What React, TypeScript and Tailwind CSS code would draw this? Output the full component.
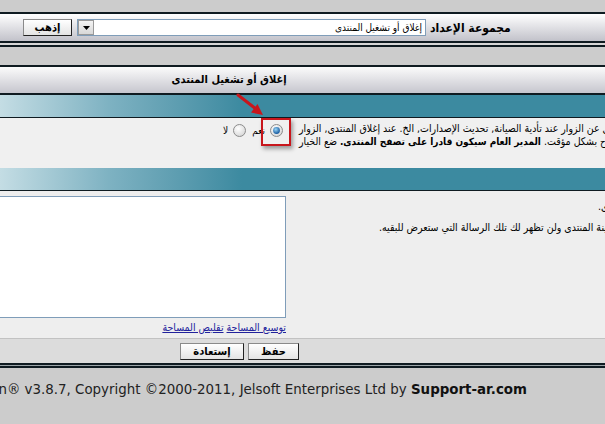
import React from "react";

// XP-style radio button
const Radio: React.FC<{ checked?: boolean }> = ({ checked }) => (
  <svg width="13" height="13" viewBox="0 0 13 13" className="shrink-0">
    <defs>
      <radialGradient id="radioFace" cx="40%" cy="35%" r="70%">
        <stop offset="0%" stopColor="#ffffff" />
        <stop offset="100%" stopColor="#d6d6d6" />
      </radialGradient>
      <radialGradient id="radioDot" cx="40%" cy="35%" r="65%">
        <stop offset="0%" stopColor="#9ad6f7" />
        <stop offset="100%" stopColor="#14589e" />
      </radialGradient>
    </defs>
    <circle cx="6.5" cy="6.5" r="6" fill="url(#radioFace)" stroke="#8c8c8c" />
    {checked && <circle cx="6.5" cy="6.5" r="3.4" fill="url(#radioDot)" />}
  </svg>
);

const Btn: React.FC<{ label: string; className?: string }> = ({ label, className }) => (
  <button
    type="button"
    dir="rtl"
    className={`h-[17px] flex items-center justify-center text-[11px] font-bold leading-none bg-linear-to-b from-white to-[#e4e4e4] border border-[#8a8a8a] border-r-[#222] border-b-[#222] ${className || ""}`}
  >
    {label}
  </button>
);

const App: React.FC = () => {
  return (
    <div className="relative w-[605px] h-[424px] overflow-hidden bg-[#cccccc] text-black font-[Tahoma,'DejaVu_Sans_Condensed','DejaVu_Sans',sans-serif] font-stretch-condensed">
      <div className="h-[12px]" />
      <div className="h-[2px] bg-[#0f1b21]" />

      {/* Setting group selector */}
      <div className="h-[27px] flex items-center pl-[23px] bg-linear-to-b from-white to-[#c2c2ca]">
        <Btn label="إذهب" className="w-[49px]" />
        <div className="ml-[5px] w-[349px] h-[17px] flex border border-[#7f9db9] bg-white">
          <div className="w-[16px] h-full flex items-center justify-center bg-linear-to-b from-[#f4f4f4] to-[#d8d8d8] border border-[#9a9a9a]">
            <svg width="7" height="4" viewBox="0 0 7 4">
              <path d="M0 0 H7 L3.5 4 Z" fill="#000" />
            </svg>
          </div>
          <div dir="rtl" className="flex-1 pr-[3px] text-[10px] leading-[15px] text-right">
            إغلاق أو تشغيل المنتدى
          </div>
        </div>
        <div dir="rtl" className="ml-[4px] text-[12px] font-bold">
          مجموعة الإعداد
        </div>
      </div>

      <div className="h-[2px] bg-[#0f1b21]" />
      <div className="h-[2px] bg-[#d6d6d6]" />
      <div className="h-[2px] bg-[#0f1b21]" />
      <div className="h-[18px]" />
      <div className="h-[2px] bg-[#0f1b21]" />

      {/* Title */}
      <div className="h-[26px] flex items-center bg-linear-to-b from-[#fbfbfb] to-[#c6c6ce]">
        <div dir="rtl" className="w-[458px] text-center text-[11px] font-bold">
          إغلاق أو تشغيل المنتدى
        </div>
      </div>
      <div className="h-[2px] bg-[#0f1b21]" />
      <div className="h-[22px] bg-linear-to-r from-[#c4dde4] via-[#7eb2c2] via-[18%] to-[#3c8aa0] to-[40%]" />
      <div className="h-[1px] bg-[#0f1b21]" />

      {/* Forum active row */}
      <div className="h-[50px] bg-[#f0f0f0] flex">
        <div className="w-[297px] shrink-0 flex justify-end items-start pt-[6px] pr-[14px]">
          <div dir="rtl" className="flex items-center text-[10px] leading-none">
            <Radio checked />
            <span className="mr-[5px]">نعم</span>
            <span className="mr-[6px]">
              <Radio />
            </span>
            <span className="mr-[5px]">لا</span>
          </div>
        </div>
        <div className="pt-[4px] text-[10.5px] leading-[13px]">
          <div className="flex pl-[2px]">
            <span dir="rtl" className="whitespace-nowrap">
              قد تحتاج إلى إغلاق المنتدى عن الزوار عند تأدية الصيانة, تحديث الإصدارات, الخ. عند إغلاق المنتدى, الزوار
            </span>
          </div>
          <div className="flex pl-[2px]">
            <span dir="rtl" className="whitespace-nowrap">
              سيشاهدون رسالة بأن المنتدى غير مفتوح بشكل مؤقت. <b className="text-[10px]">المدير العام سيكون قادرا على تصفح المنتدى.</b> ضع الخيار
            </span>
          </div>
        </div>
      </div>

      <div className="h-[22px] bg-linear-to-r from-[#c4dde4] via-[#7eb2c2] via-[18%] to-[#3c8aa0] to-[40%]" />
      <div className="h-[1px] bg-[#0f1b21]" />

      {/* Closed message row */}
      <div className="h-[147px] bg-[#eeeeee] flex">
        <div className="w-[297px] shrink-0 pt-[5px]">
          <textarea
            readOnly
            className="block w-[286px] h-[122px] bg-white border border-l-0 border-[#7f9db9] resize-none outline-none"
          />
          <div dir="rtl" className="w-[286px] flex mt-[3px] text-[10.5px] leading-[13px] text-[#22229c]">
            <a className="underline">توسيع المساحة</a>
            <a className="underline mr-[3px]">تقليص المساحة</a>
          </div>
        </div>
        <div className="pt-[9px] text-[10.5px] leading-[13px]">
          <div className="flex pl-[301px]">
            <span dir="rtl" className="whitespace-nowrap">
              هذه الرسالة ستظهر للزوار عند إغلاق المنتدى.
            </span>
          </div>
          <div className="flex pl-[82px] mt-[8px]">
            <span dir="rtl" className="whitespace-nowrap">
              المدير العام سيستطيع معاينة المنتدى ولن تظهر لك تلك الرسالة التي ستعرض للبقيه.
            </span>
          </div>
        </div>
      </div>

      <div className="h-[1px] bg-[#c2c2c2]" />
      <div className="h-[24px] bg-[#dcdcdc] flex items-start pt-[4px] pl-[180px]">
        <Btn label="إستعادة" className="w-[64px]" />
        <Btn label="حفظ" className="w-[51px] ml-[4px]" />
      </div>
      <div className="h-[2px] bg-[#0f1b21]" />
      <div className="h-[1px] bg-[#9aa4a8]" />
      <div className="h-[2px] bg-[#0f1b21]" />

      {/* Footer */}
      <div className="flex justify-end pr-[78px] pt-[14px] text-[13.4px] leading-[16px] text-[#222] font-['Verdana','DejaVu_Sans',sans-serif] font-stretch-normal">
        <span className="whitespace-nowrap">
          Powered by vBulletin® v3.8.7, Copyright ©2000-2011, Jelsoft Enterprises Ltd by <b className="text-[#111]">Support-ar.com</b>
        </span>
      </div>

      {/* Annotation: red box and arrow */}
      <div className="absolute left-[261px] top-[118px] w-[30px] h-[28px] border-2 border-[#c8161c] shadow-[2px_3px_4px_rgba(0,0,0,0.35)]" />
      <svg className="absolute left-[230px] top-[88px]" width="40" height="35" viewBox="0 0 40 35">
        <line x1="8" y1="7" x2="26" y2="21" stroke="#c8161c" strokeWidth="3" strokeLinecap="round" />
        <path d="M33 27 L21 24.5 L27.5 16 Z" fill="#c8161c" />
      </svg>
    </div>
  );
};

export default App;
